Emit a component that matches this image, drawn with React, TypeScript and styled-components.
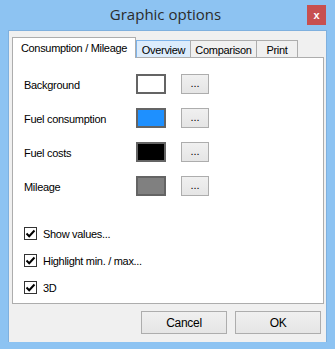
import React, { useState } from 'react';
import styled, { createGlobalStyle } from 'styled-components';

const GlobalStyle = createGlobalStyle`
  html, body {
    margin: 0;
    padding: 0;
    background: #8dc3f2;
  }
  body {
    font-family: 'Liberation Sans', Arial, sans-serif;
    font-size: 11px;
    letter-spacing: -0.3px;
    color: #000;
  }
`;

interface ColorRow {
  label: string;
  color: string;
}

const rows: ColorRow[] = [
  { label: 'Background', color: '#ffffff' },
  { label: 'Fuel consumption', color: '#1e90ff' },
  { label: 'Fuel costs', color: '#000000' },
  { label: 'Mileage', color: '#808080' },
];

const tabs = [
  { label: 'Consumption / Mileage', width: 124 },
  { label: 'Overview', width: 55 },
  { label: 'Comparison', width: 67 },
  { label: 'Print', width: 42 },
];

const options = ['Show values...', 'Highlight min. / max...', '3D'];

function App() {
  const [checks, setChecks] = useState<boolean[]>([true, true, true]);
  const toggle = (i: number) =>
    setChecks(checks.map((c, idx) => (idx === i ? !c : c)));

  return (
    <>
      <GlobalStyle />
      <Window>
        <TitleBar>
          <Title>Graphic options</Title>
          <CloseButton>x</CloseButton>
        </TitleBar>
        <Body>
          <TabStrip>
            {tabs.map((t, i) => (
              <Tab key={t.label} $active={i === 0} $hover={i === 1} $width={t.width}>
                {t.label}
              </Tab>
            ))}
          </TabStrip>
          <Panel>
            <ColorList>
              {rows.map((r) => (
                <Row key={r.label}>
                  <Label>{r.label}</Label>
                  <Swatch $color={r.color} />
                  <DotsButton>...</DotsButton>
                </Row>
              ))}
            </ColorList>
            <CheckList>
              {options.map((t, i) => (
                <CheckRow key={t} onClick={() => toggle(i)}>
                  <Box>
                    {checks[i] && (
                      <svg width="11" height="11" viewBox="0 0 11 11">
                        <path
                          d="M1.5 5.5 L4.2 8.2 L9.5 2.5"
                          fill="none"
                          stroke="#000"
                          strokeWidth="2"
                        />
                      </svg>
                    )}
                  </Box>
                  <span>{t}</span>
                </CheckRow>
              ))}
            </CheckList>
          </Panel>
          <Footer>
            <DialogButton>Cancel</DialogButton>
            <DialogButton>OK</DialogButton>
          </Footer>
        </Body>
      </Window>
    </>
  );
}

export default App;

const Window = styled.div`
  width: 335px;
  height: 349px;
  box-sizing: border-box;
  padding: 0 8px 7px 8px;
  display: flex;
  flex-direction: column;
  background: #8dc3f2;
`;

const TitleBar = styled.div`
  height: 30px;
  flex: none;
  display: flex;
  align-items: center;
  justify-content: center;
  position: relative;
`;

const Title = styled.div`
  font-family: 'Open Sans', 'Liberation Sans', sans-serif;
  font-size: 15px;
  letter-spacing: 0;
  color: #2b2b2b;
  margin-top: -2px;
  margin-left: -4px;
`;

const CloseButton = styled.div`
  position: absolute;
  right: 1px;
  top: 5px;
  width: 19px;
  height: 20px;
  background: #c75050;
  color: #fff;
  font-weight: bold;
  font-size: 11px;
  letter-spacing: 0;
  display: flex;
  align-items: center;
  justify-content: center;
`;

const Body = styled.div`
  flex: 1;
  background: #f0f0f0;
  border: 1px solid #7fb0de;
  border-bottom: none;
  padding: 6px 3px 0 3px;
  display: flex;
  flex-direction: column;
`;

const TabStrip = styled.div`
  display: flex;
  align-items: flex-end;
  height: 21px;
  margin-bottom: -1px;
  position: relative;
  z-index: 1;
`;

const Tab = styled.div<{ $active?: boolean; $hover?: boolean; $width: number }>`
  box-sizing: border-box;
  width: ${(p) => p.$width}px;
  height: ${(p) => (p.$active ? '21px' : '18px')};
  padding-top: ${(p) => (p.$active ? '3px' : '2px')};
  margin-left: ${(p) => (p.$active ? '0' : '-1px')};
  border: 1px solid ${(p) => (p.$hover ? '#7eb4ea' : '#adadad')};
  border-bottom: ${(p) => (p.$active ? 'none' : '1px solid #adadad')};
  background: ${(p) => (p.$active ? '#fff' : p.$hover ? '#dcecfc' : '#f0f0f0')};
  white-space: nowrap;
  text-align: center;
  line-height: 14px;
  &:nth-child(2) {
    margin-left: 0;
  }
`;

const Panel = styled.div`
  width: 312px;
  height: 247px;
  box-sizing: border-box;
  background: #fff;
  border: 1px solid #adadad;
  padding: 16px 11px 0 11px;
`;

const ColorList = styled.div`
  display: flex;
  flex-direction: column;
  gap: 14px;
`;

const Row = styled.div`
  display: flex;
  align-items: center;
  height: 20px;
`;

const Label = styled.div`
  width: 112px;
  white-space: nowrap;
  padding-top: 1px;
`;

const Swatch = styled.div<{ $color: string }>`
  width: 30px;
  height: 20px;
  box-sizing: border-box;
  border: 2px solid #646464;
  background: ${(p) => p.$color};
`;

const DotsButton = styled.div`
  width: 28px;
  height: 20px;
  margin-left: 15px;
  box-sizing: border-box;
  border: 1px solid #adadad;
  background: linear-gradient(#f0f0f0, #e5e5e5);
  display: flex;
  align-items: center;
  justify-content: center;
  font-size: 11px;
  letter-spacing: 0;
  padding-bottom: 2px;
`;

const CheckList = styled.div`
  display: flex;
  flex-direction: column;
  gap: 14px;
  margin-top: 31px;
`;

const CheckRow = styled.div`
  display: flex;
  align-items: center;
  gap: 6px;
  height: 13px;
`;

const Box = styled.div`
  width: 13px;
  height: 13px;
  box-sizing: border-box;
  border: 1px solid #333;
  background: #fff;
  display: flex;
  align-items: center;
  justify-content: center;
`;

const Footer = styled.div`
  display: flex;
  justify-content: flex-end;
  gap: 8px;
  padding: 7px 2px 0 0;
`;

const DialogButton = styled.div`
  width: 86px;
  height: 23px;
  box-sizing: border-box;
  border: 1px solid #adadad;
  background: linear-gradient(#f0f0f0, #e5e5e5);
  display: flex;
  align-items: center;
  justify-content: center;
  font-size: 12px;
`;
